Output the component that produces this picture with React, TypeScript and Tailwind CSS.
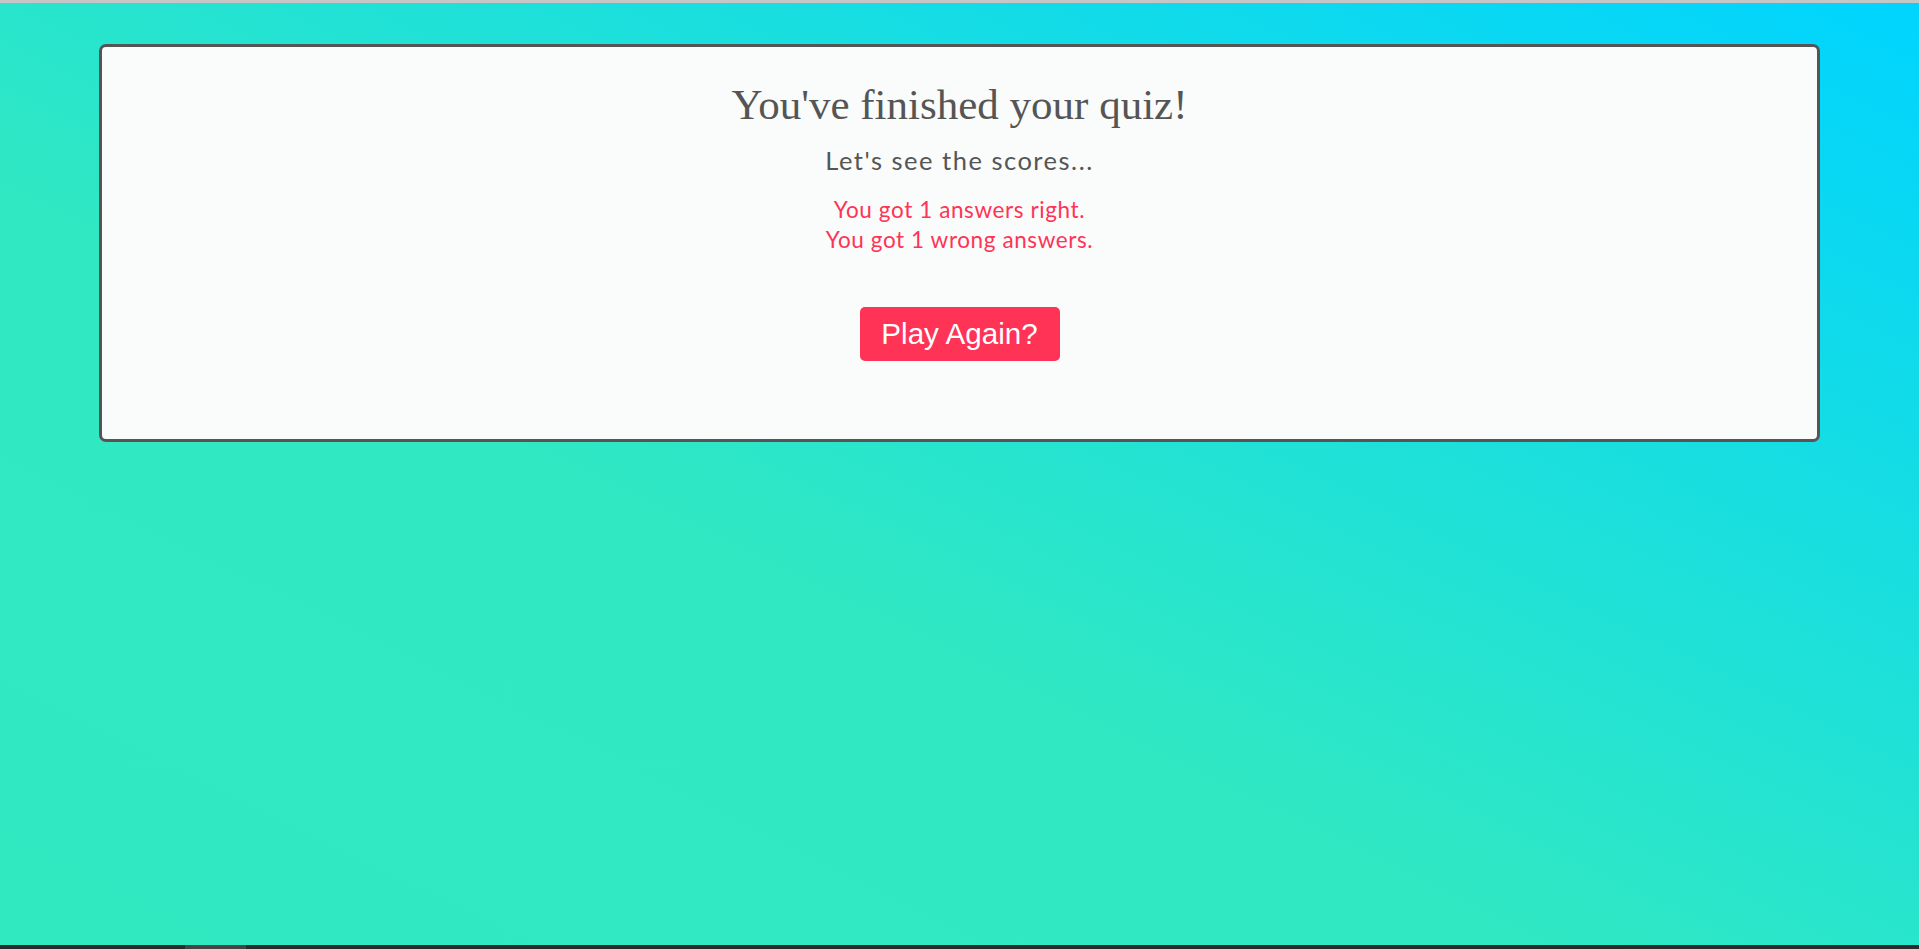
import React from "react";

export default function App() {
  return (
    <div className="flex h-[949px] w-full flex-col overflow-hidden">
      <div className="h-[3px] w-full bg-[#c6c6c6]" />
      <div className="flex-1 bg-[linear-gradient(to_top_right,#31e9c1_0%,#30e8c2_40%,#00d4ff_100%)] pt-[41px]">
        <div className="mx-[99px] flex h-[398px] flex-col items-center rounded-[7px] border-[3px] border-[#555555] bg-[#fafbfb] pt-[33px] text-center">
          <h1 className="text-[43px] leading-[50px] text-[#555555] [font-family:'Liberation_Serif',serif]">
            You've finished your quiz!
          </h1>
          <p className="mt-[15px] text-[25.5px] leading-[30px] tracking-[1.5px] text-[#555555] [font-family:Lato,sans-serif]">
            Let's see the scores...
          </p>
          <div className="mt-[20px] text-[22.5px] leading-[30px] tracking-[0.6px] text-[#ff3355] [font-family:Lato,sans-serif]">
            <p>You got 1 answers right.</p>
            <p>You got 1 wrong answers.</p>
          </div>
          <button className="mt-[52px] flex h-[54px] w-[200px] items-center justify-center rounded-[5px] bg-[#ff3355] text-[29.6px] text-white [font-family:'Liberation_Sans',Arial,sans-serif]">
            Play Again?
          </button>
        </div>
      </div>
      <div className="flex h-[4px] w-full bg-[#282a2c]">
        <div className="ml-[185px] h-full w-[61px] bg-[#444444]" />
      </div>
    </div>
  );
}
